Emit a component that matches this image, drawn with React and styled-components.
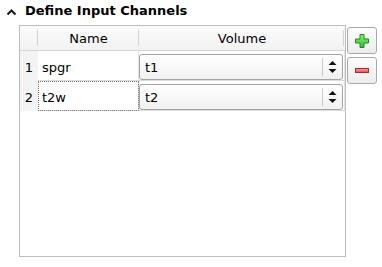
import React from 'react';
import styled, { createGlobalStyle } from 'styled-components';

const GlobalStyle = createGlobalStyle`
  body {
    margin: 0;
    background: #ffffff;
    font-family: "DejaVu Sans", sans-serif;
    font-size: 13px;
    color: #000000;
  }
`;

const Page = styled.div`
  width: 382px;
  height: 267px;
`;

const TitleRow = styled.div`
  display: flex;
  align-items: flex-start;
  height: 25px;
  padding: 3px 0 0 6px;
  box-sizing: border-box;
`;

const Chevron = styled.svg`
  width: 11px;
  height: 8px;
  margin: 5px 8px 0 0;
`;

const Title = styled.span`
  font-weight: bold;
  line-height: 15px;
`;

const Body = styled.div`
  display: flex;
  align-items: flex-start;
  gap: 1px;
  padding-left: 19px;
`;

const Frame = styled.div`
  width: 327px;
  height: 232px;
  border: 1px solid #bdbdbd;
  box-sizing: border-box;
  background: #ffffff;
`;

const Grid = styled.div`
  display: grid;
  grid-template-columns: 18px 101px 206px;
`;

const HeadCell = styled.div`
  position: relative;
  height: 24px;
  border-bottom: 1px solid #d6d6d6;
  background: linear-gradient(#fbfbfb, #f2f2f2);
  display: flex;
  align-items: center;
  justify-content: center;
  line-height: 15px;

  &::after {
    content: '';
    position: absolute;
    right: ${({ $sepRight }) => $sepRight}px;
    top: 4px;
    bottom: 4px;
    width: 1px;
    background: #d2d2d2;
  }
`;

const RowNum = styled.div`
  position: relative;
  height: 30px;
  padding-top: 3px;
  box-sizing: border-box;
  background: #f3f3f3;
  display: flex;
  align-items: center;
  justify-content: center;

  &::after {
    content: '';
    display: ${({ $last }) => ($last ? 'none' : 'block')};
    position: absolute;
    left: 4px;
    right: 0;
    bottom: -1px;
    height: 1px;
    background: #cfcfcf;
  }
`;

const Cell = styled.div`
  height: 30px;
  box-sizing: border-box;
  padding: 3px 0 0 ${({ $pad }) => $pad}px;
  border-right: 1px solid #e4e4e4;
  border-bottom: 1px solid #dcdcdc;
  display: flex;
  align-items: center;
  outline: ${({ $focused }) => ($focused ? '1px dotted #7a7a7a' : 'none')};
  outline-offset: -1px;
`;

const Combo = styled.div`
  width: 204px;
  height: 26px;
  box-sizing: border-box;
  border: 1px solid #a3a3a3;
  border-radius: 3px;
  background: linear-gradient(#ffffff, #f1f1f1);
  display: flex;
  align-items: center;
`;

const ComboText = styled.span`
  flex: 1;
  padding-left: 5px;
`;

const SpinSep = styled.div`
  width: 1px;
  align-self: stretch;
  margin: 3px 0;
  background: #cacaca;
`;

const Spin = styled.svg`
  width: 19px;
  height: 14px;
`;

const Buttons = styled.div`
  display: flex;
  flex-direction: column;
  gap: 3px;
  padding-top: 2px;
`;

const ToolButton = styled.div`
  width: 30px;
  height: 27px;
  box-sizing: border-box;
  border: 1px solid #a9a9a9;
  border-radius: 3px;
  background: linear-gradient(#fdfdfd, #ececec);
  display: flex;
  align-items: center;
  justify-content: center;
`;

const rows = [
  { n: 1, name: 'spgr', vol: 't1' },
  { n: 2, name: 't2w', vol: 't2', focused: true },
];

const ComboBox = ({ value }) => (
  <Combo>
    <ComboText>{value}</ComboText>
    <SpinSep />
    <Spin viewBox="0 0 19 14">
      <polygon points="5.5,5 9.5,1 13.5,5" fill="#111" />
      <polygon points="5.5,9 13.5,9 9.5,13" fill="#111" />
    </Spin>
  </Combo>
);

const PlusIcon = () => (
  <svg width="16" height="16" viewBox="0 0 16 16">
    <defs>
      <linearGradient id="pg" x1="0" y1="0" x2="0" y2="1">
        <stop offset="0" stopColor="#8af07a" />
        <stop offset="1" stopColor="#36c22e" />
      </linearGradient>
    </defs>
    <path
      d="M6 1.5h4v4.5h4.5v4h-4.5v4.5h-4v-4.5h-4.5v-4h4.5z"
      fill="url(#pg)"
      stroke="#1e8a1a"
      strokeWidth="1"
    />
  </svg>
);

const MinusIcon = () => (
  <svg width="16" height="8" viewBox="0 0 16 8">
    <defs>
      <linearGradient id="mg" x1="0" y1="0" x2="0" y2="1">
        <stop offset="0" stopColor="#f6a3a3" />
        <stop offset="1" stopColor="#e05252" />
      </linearGradient>
    </defs>
    <rect x="1.5" y="1.5" width="13" height="4" fill="url(#mg)" stroke="#b02828" strokeWidth="1" />
  </svg>
);

export default function App() {
  return (
    <Page>
      <GlobalStyle />
      <TitleRow>
        <Chevron viewBox="0 0 11 8">
          <polyline points="1.5,6.5 5.5,2.5 9.5,6.5" fill="none" stroke="#1a1a1a" strokeWidth="2" />
        </Chevron>
        <Title>Define Input Channels</Title>
      </TitleRow>
      <Body>
        <Frame>
          <Grid>
            <HeadCell $sepRight={0} />
            <HeadCell $sepRight={0}>Name</HeadCell>
            <HeadCell $sepRight={1}>Volume</HeadCell>
            {rows.map((r, i) => (
              <React.Fragment key={r.n}>
                <RowNum $last={i === rows.length - 1}>{r.n}</RowNum>
                <Cell $pad={4} $focused={r.focused}>{r.name}</Cell>
                <Cell $pad={0}>
                  <ComboBox value={r.vol} />
                </Cell>
              </React.Fragment>
            ))}
          </Grid>
        </Frame>
        <Buttons>
          <ToolButton>
            <PlusIcon />
          </ToolButton>
          <ToolButton>
            <MinusIcon />
          </ToolButton>
        </Buttons>
      </Body>
    </Page>
  );
}
